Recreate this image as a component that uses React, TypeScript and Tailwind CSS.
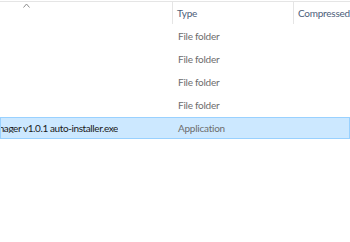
import React from "react";

const font = { fontFamily: 'Lato, "Noto Sans", sans-serif' };

function Row({ name, type, selected }: { name?: string; type: string; selected?: boolean }) {
  return (
    <div
      className={
        "flex h-[22px] mb-[1px] items-center border " +
        (selected ? "bg-[#cce8ff] border-[#99d1ff]" : "border-transparent")
      }
    >
      <div className="w-[172px] shrink-0 flex">
        <div className="w-[117px] shrink-0 overflow-hidden whitespace-nowrap flex justify-end text-[#1a1a1a]">
          {name ? <span className="tracking-[-0.4px]">{name}</span> : null}
        </div>
      </div>
      <div className="pl-[5px] text-[#6d6d6d] whitespace-nowrap">{type}</div>
    </div>
  );
}

export default function App() {
  return (
    <div
      className="w-[350px] h-[242px] bg-white overflow-hidden text-[10px] tracking-[-0.25px] leading-none"
      style={font}
    >
      <div className="h-[1px] bg-[#e5e5e5] mt-[1px]" />
      <div className="flex h-[22px] relative">
        <div className="w-[173px] shrink-0 border-r border-[#e5e5e5] relative">
          <svg className="absolute left-[23px] top-[1px]" width="7" height="5" viewBox="0 0 7 5">
            <path d="M0.5 4.5 L3.5 1 L6.5 4.5" fill="none" stroke="#8c8c8c" strokeWidth="1" />
          </svg>
        </div>
        <div className="w-[121px] shrink-0 border-r border-[#e5e5e5] pl-[4px] pt-[6px] text-[#4c607a]">Type</div>
        <div className="pl-[4px] pt-[6px] text-[#4c607a] whitespace-nowrap">Compressed</div>
      </div>
      <div className="mt-[1px]">
        <Row type="File folder" />
        <Row type="File folder" />
        <Row type="File folder" />
        <Row type="File folder" />
        <Row name="Manager v1.0.1 auto-installer.exe" type="Application" selected />
      </div>
    </div>
  );
}
